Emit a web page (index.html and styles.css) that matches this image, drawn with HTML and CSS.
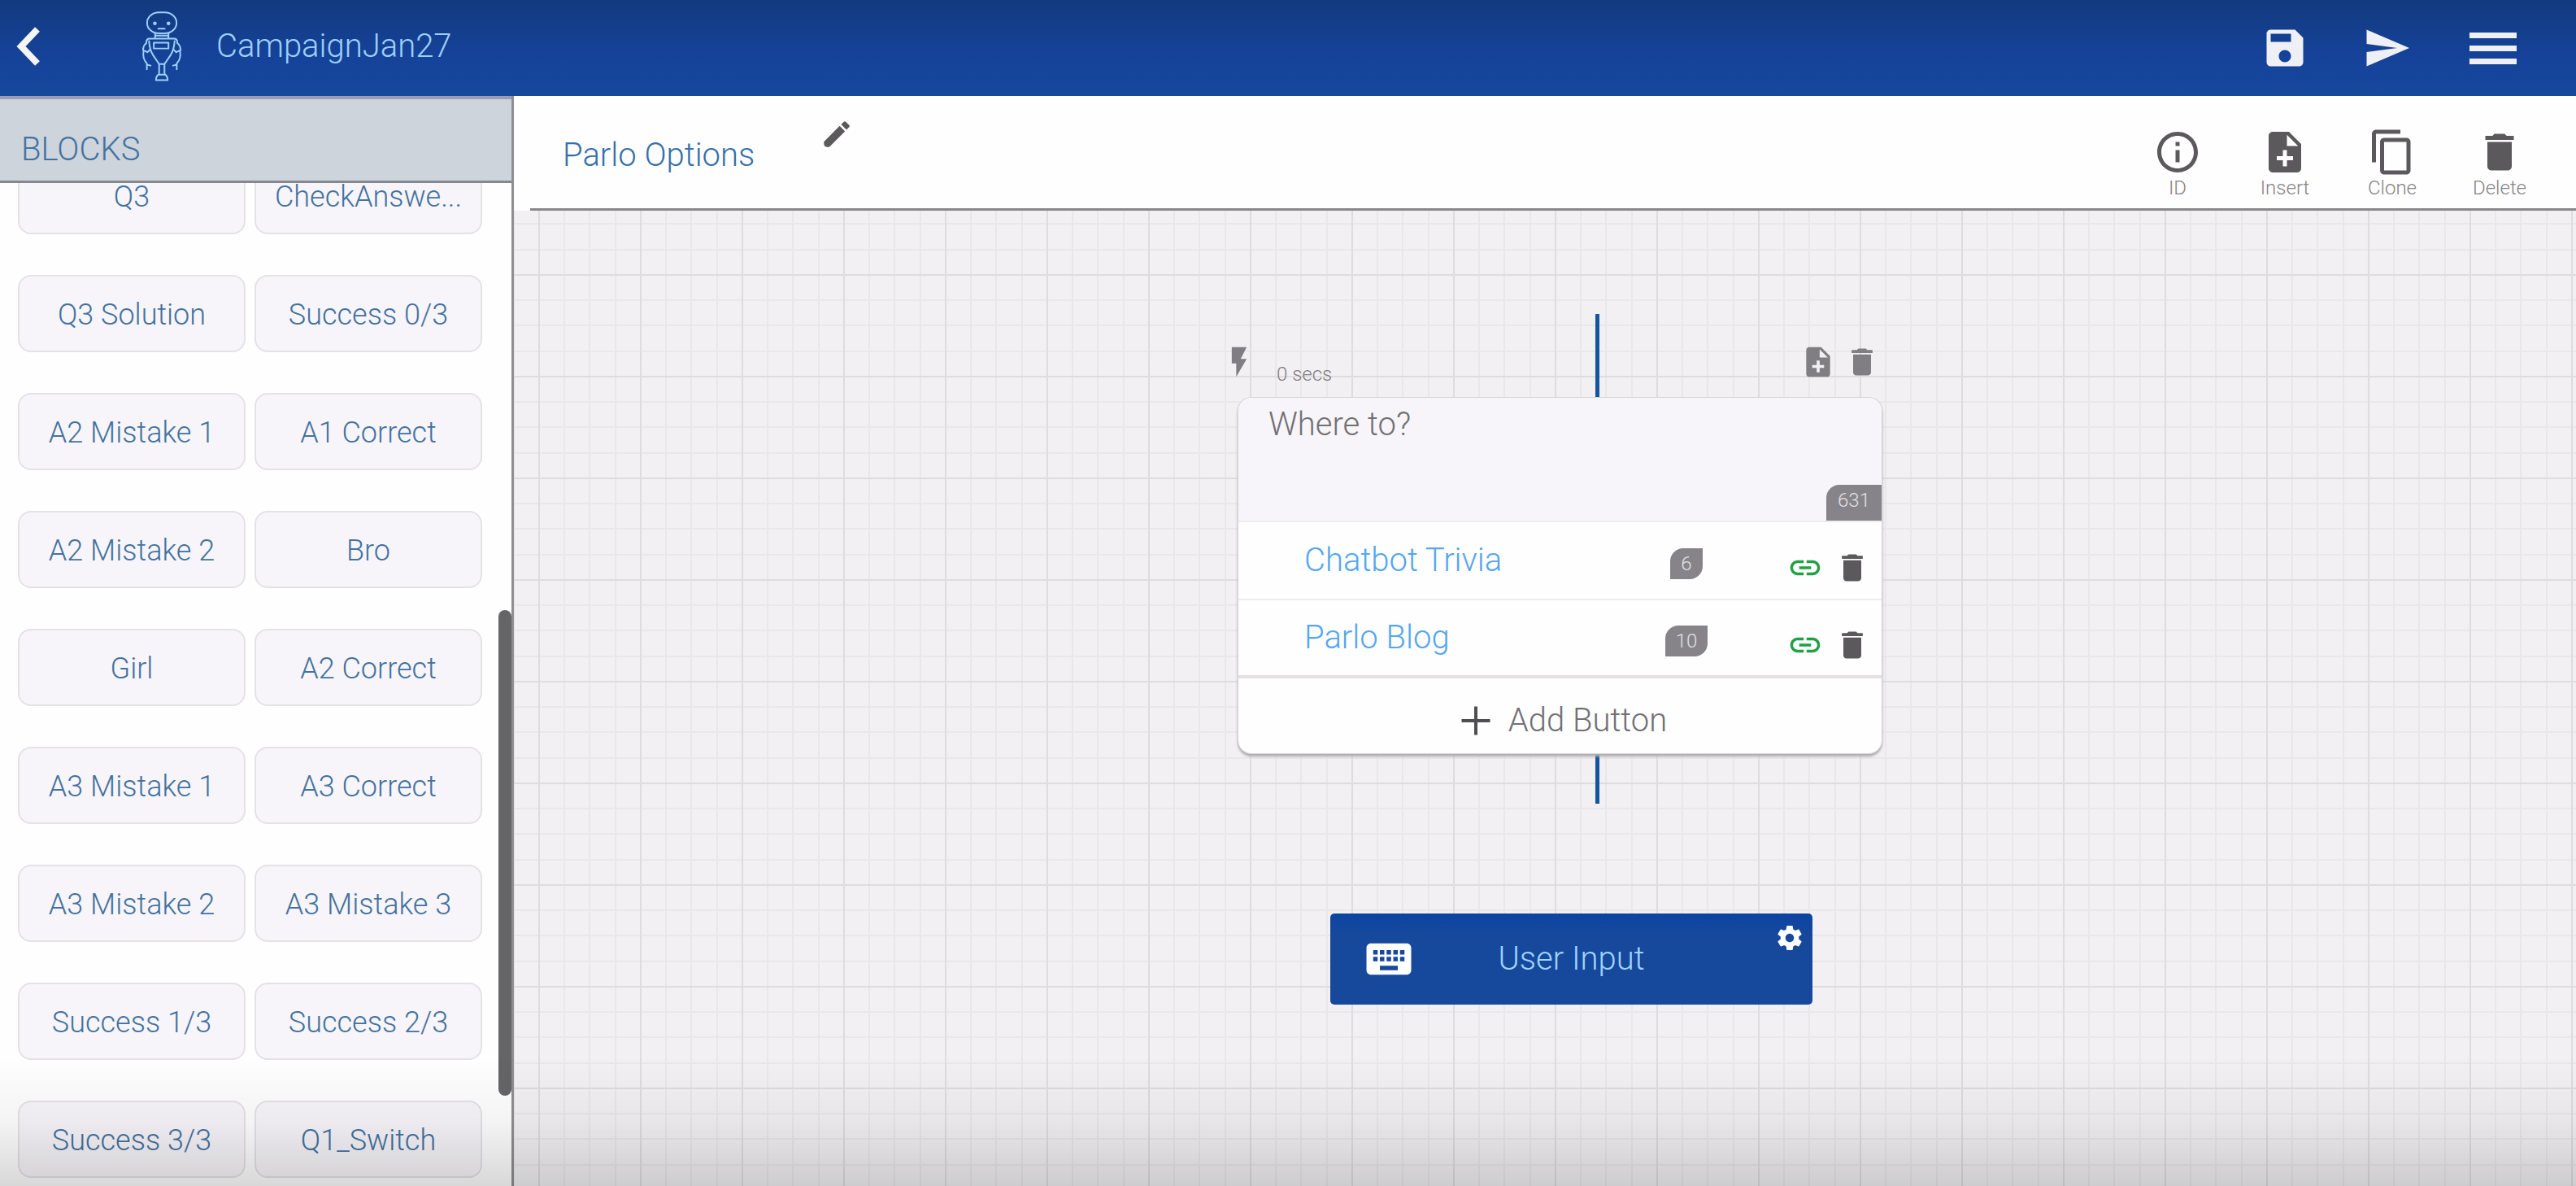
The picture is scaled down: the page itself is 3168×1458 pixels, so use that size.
FILE: index.html
```html
<!DOCTYPE html>
<html lang="en">
<head>
<meta charset="utf-8">
<title>CampaignJan27</title>
<link rel="stylesheet" href="styles.css">
</head>
<body>
<svg class="sprite" aria-hidden="true">
  <symbol id="i-trash" viewBox="0 0 24 24"><path d="M6 19c0 1.1.9 2 2 2h8c1.100 0 2-.9 2-2V7H6v12zM19 4h-3.500l-1-1h-5l-1 1H5v2h14V4z"/></symbol>
  <symbol id="i-note" viewBox="0 0 24 24"><path d="M14 2H6c-1.100 0-2 .9-2 2v16c0 1.100.9 2 2 2h12c1.100 0 2-.9 2-2V8l-6-6zm2 14h-3v3h-2v-3H8v-2h3v-3h2v3h3v2zm-3-7V3.500L18.500 9H13z"/></symbol>
  <symbol id="i-link" viewBox="0 0 24 24"><path d="M3.900 12c0-1.710 1.390-3.100 3.100-3.100h4V7H7c-2.760 0-5 2.240-5 5s2.240 5 5 5h4v-1.900H7c-1.710 0-3.100-1.390-3.100-3.100zM8 13h8v-2H8v2zm9-6h-4v1.900h4c1.710 0 3.100 1.390 3.100 3.100s-1.390 3.100-3.100 3.100h-4V17h4c2.760 0 5-2.240 5-5s-2.240-5-5-5z"/></symbol>
</svg>

<header class="topbar">
  <div class="topbar-left">
    <button class="icon-btn back" aria-label="Back"><svg viewBox="0 0 30 48"><path d="M26 3 6 24l20 21" fill="none" stroke="currentColor" stroke-width="8"/></svg></button>
    <svg class="robot" viewBox="100 30 160 280" stroke="currentColor" stroke-width="6" stroke-linejoin="round" stroke-linecap="round" aria-hidden="true">
      <rect x="125" y="43" width="110" height="78" rx="44" ry="38"/>
      <path d="M167 104h24M155 122v17M205 122v17M157 130h46"/>
      <circle cx="154" cy="84" r="4" fill="currentColor"/><circle cx="205" cy="84" r="4" fill="currentColor"/>
      <path d="M122 156c0-10 4-15 12-15h92c8 0 12 5 12 15"/>
      <rect x="150" y="156" width="55" height="22"/>
      <path d="M132 150c2 30 8 42 16 54l22 32h20l22-32c8-12 14-24 16-54"/>
      <path d="M122 158c-8 6-12 16-12 26l16 8 10-10M238 158c8 6 12 16 12 26l-16 8-10-10"/>
      <path d="M112 186c-4 22 0 36 12 48v22M124 238l14 4M248 186c4 22 0 36-12 48v22M236 238l-14 4"/>
      <path d="M170 238v36M190 238v36M166 276h28M158 296c0-12 6-20 12-20h20c6 0 12 8 12 20z"/>
    </svg>
    <h1 class="text-lg">CampaignJan27</h1>
  </div>
  <nav class="topbar-actions" aria-label="Campaign">
    <button class="icon-btn" aria-label="Save"><svg class="icon-lg" viewBox="0 0 24 24"><path d="M17 3H5c-1.110 0-2 .9-2 2v14c0 1.100.89 2 2 2h14c1.100 0 2-.9 2-2V7l-4-4zm-5 16c-1.660 0-3-1.340-3-3s1.340-3 3-3 3 1.340 3 3-1.340 3-3 3zm3-10H5V5h10v4z"/></svg></button>
    <button class="icon-btn" aria-label="Send"><svg class="icon-lg" viewBox="0 0 24 24"><path d="M1 21 22 12 1 3v7l15 2-15 2z"/></svg></button>
    <button class="icon-btn" aria-label="Menu"><svg class="icon-lg" viewBox="0 0 60 60"><path d="M1 11h58v7H1zM1 27h58v7H1zM1 43h58v7H1z"/></svg></button>
  </nav>
</header>

<div class="workspace">
  <aside class="sidebar">
    <h2 class="sidebar-title text-lg">BLOCKS</h2>
    <div class="block-list">
      <button class="block">Q3</button><button class="block">CheckAnswe...</button>
      <button class="block">Q3 Solution</button><button class="block">Success 0/3</button>
      <button class="block">A2 Mistake 1</button><button class="block">A1 Correct</button>
      <button class="block">A2 Mistake 2</button><button class="block">Bro</button>
      <button class="block">Girl</button><button class="block">A2 Correct</button>
      <button class="block">A3 Mistake 1</button><button class="block">A3 Correct</button>
      <button class="block">A3 Mistake 2</button><button class="block">A3 Mistake 3</button>
      <button class="block">Success 1/3</button><button class="block">Success 2/3</button>
      <button class="block">Success 3/3</button><button class="block">Q1_Switch</button>
    </div>
    <div class="scroll-thumb"></div>
  </aside>

  <main class="main">
    <div class="block-bar">
      <h2 class="block-name text-lg">Parlo Options</h2>
      <button class="icon-btn edit" aria-label="Rename block"><svg viewBox="0 0 24 24"><path d="M3 18.500c0 1.500 1 2.500 2.500 2.500h1.250L17.810 9.940l-3.750-3.750L3 17.250v1.250zM20.710 7.040c.39-.39.39-1.020 0-1.410l-2.340-2.340c-.39-.39-1.020-.39-1.410 0l-1.830 1.830 3.750 3.750 1.830-1.830z"/></svg></button>
      <div class="tools">
        <button class="tool"><svg class="icon-lg" viewBox="0 0 24 24"><path d="M11 7h2v2h-2zm0 4h2v6h-2zm1-9C6.480 2 2 6.480 2 12s4.480 10 10 10 10-4.480 10-10S17.520 2 12 2zm0 18c-4.410 0-8-3.590-8-8s3.590-8 8-8 8 3.590 8 8-3.590 8-8 8z"/></svg>ID</button>
        <button class="tool"><svg class="icon-lg"><use href="#i-note"/></svg>Insert</button>
        <button class="tool"><svg class="icon-lg" viewBox="0 0 24 24"><path d="M16 1H4c-1.100 0-2 .9-2 2v14h2V3h12V1zm3 4H8c-1.100 0-2 .9-2 2v14c0 1.100.9 2 2 2h11c1.100 0 2-.9 2-2V7c0-1.100-.9-2-2-2zm0 16H8V7h11v14z"/></svg>Clone</button>
        <button class="tool"><svg class="icon-lg"><use href="#i-trash"/></svg>Delete</button>
      </div>
    </div>

    <div class="canvas">
      <div class="connector connector-in"></div>
      <div class="connector connector-out"></div>

      <section class="message">
        <div class="message-meta">
          <svg class="icon-sm" viewBox="0 0 24 24" aria-hidden="true"><path d="M7 2v11h3v9l7-12h-4l4-8z"/></svg>
          <span class="delay">0 secs</span>
          <button class="icon-btn" aria-label="Insert message"><svg class="icon-sm"><use href="#i-note"/></svg></button>
          <button class="icon-btn" aria-label="Delete message"><svg class="icon-sm"><use href="#i-trash"/></svg></button>
        </div>
        <div class="card">
          <div class="prompt">
            <textarea class="prompt-text text-lg" aria-label="Message text">Where to?</textarea>
            <span class="chars-left">631</span>
          </div>
          <div class="choice">
            <button class="choice-label text-lg">Chatbot Trivia</button>
            <span class="count-slot"><span class="count">6</span></span>
            <button class="icon-btn link" aria-label="Link Chatbot Trivia"><svg class="icon-sm"><use href="#i-link"/></svg></button>
            <button class="icon-btn" aria-label="Delete Chatbot Trivia"><svg class="icon-sm"><use href="#i-trash"/></svg></button>
          </div>
          <div class="choice">
            <button class="choice-label text-lg">Parlo Blog</button>
            <span class="count-slot"><span class="count">10</span></span>
            <button class="icon-btn link" aria-label="Link Parlo Blog"><svg class="icon-sm"><use href="#i-link"/></svg></button>
            <button class="icon-btn" aria-label="Delete Parlo Blog"><svg class="icon-sm"><use href="#i-trash"/></svg></button>
          </div>
          <button class="add-button text-lg"><svg class="icon-lg" viewBox="0 0 24 24" aria-hidden="true"><path d="M19 12.800h-6.200V19h-1.600v-6.200H5v-1.600h6.200V5h1.600v6.200H19z"/></svg>Add Button</button>
        </div>
      </section>

      <section class="user-input">
        <svg class="keyboard" viewBox="0 0 24 24" aria-hidden="true"><path d="M20 5H4c-1.100 0-1.990.9-1.990 2L2 17c0 1.100.9 2 2 2h16c1.100 0 2-.9 2-2V7c0-1.100-.9-2-2-2zm-9 3h2v2h-2V8zm0 3h2v2h-2v-2zM8 8h2v2H8V8zm0 3h2v2H8v-2zm-1 2H5v-2h2v2zm0-3H5V8h2v2zm9 7H8v-2h8v2zm0-4h-2v-2h2v2zm0-3h-2V8h2v2zm3 3h-2v-2h2v2zm0-3h-2V8h2v2z"/></svg>
        <span class="text-lg">User Input</span>
        <button class="icon-btn gear" aria-label="User input settings"><svg viewBox="0 0 24 24"><path d="M19.430 12.980c.04-.32.07-.64.07-.98s-.03-.66-.07-.98l2.110-1.650c.19-.15.24-.42.12-.64l-2-3.460c-.12-.22-.39-.3-.61-.22l-2.490 1c-.52-.4-1.080-.73-1.690-.98l-.38-2.650C14.460 2.180 14.250 2 14 2h-4c-.25 0-.46.18-.49.42l-.38 2.650c-.61.25-1.170.59-1.690.98l-2.490-1c-.23-.09-.49 0-.61.22l-2 3.460c-.13.22-.07.49.12.64l2.110 1.650c-.04.32-.07.65-.07.98s.03.66.07.98l-2.110 1.650c-.19.15-.24.42-.12.64l2 3.460c.12.22.39.3.61.22l2.490-1c.52.4 1.080.73 1.690.98l.38 2.650c.03.24.24.42.49.42h4c.25 0 .46-.18.49-.42l.38-2.650c.61-.25 1.170-.59 1.690-.98l2.490 1c.23.09.49 0 .61-.22l2-3.460c.12-.22.07-.49-.12-.64l-2.110-1.650zM12 15.500c-1.930 0-3.500-1.570-3.500-3.500s1.570-3.500 3.500-3.500 3.500 1.570 3.500 3.500-1.570 3.500-3.500 3.500z"/></svg></button>
      </section>
    </div>
  </main>
</div>
</body>
</html>
```

FILE: styles.css
```css
* {
  box-sizing: border-box;
}

body {
  margin: 0;
  height: 100vh;
  display: flex;
  flex-direction: column;
  overflow: hidden;
  background: #fefefe;
  font-family: Roboto, "Liberation Sans", sans-serif;
  font-weight: 300;
}

/* shade along the lower edge of the window */
body::after {
  content: "";
  position: fixed;
  inset: auto 0 0;
  height: 160px;
  background: linear-gradient(transparent, rgba(0, 0, 0, .04) 50%, rgba(0, 0, 0, .15));
  pointer-events: none;
}

h1, h2 {
  margin: 0;
}

button, textarea {
  margin: 0;
  padding: 0;
  border: 0;
  background: none;
  color: inherit;
  font: inherit;
}

button {
  cursor: pointer;
}

svg {
  display: block;
  flex: none;
  fill: currentColor;
}

.sprite {
  position: absolute;
  width: 0;
  height: 0;
}

.text-lg {
  font-size: 40px;
  line-height: 48px;
  font-weight: 300;
}

.icon-lg {
  width: 60px;
  height: 60px;
}

.icon-sm {
  width: 44px;
  height: 44px;
}

.icon-btn {
  display: flex;
  align-items: center;
  justify-content: center;
}

/* top bar */
.topbar {
  flex: none;
  display: flex;
  justify-content: space-between;
  height: 118px;
  padding: 0 38px 0 20px;
  background: linear-gradient(#133a7f, #15439a 60%, #16489c);
  color: #eef0f6;
}

.topbar-left {
  display: flex;
  align-items: center;
  padding-bottom: 4px;
  color: #9fd0fb;
}

.back {
  color: #f4f4f0;
}

.back svg {
  width: 30px;
  height: 48px;
}

.robot {
  width: 54px;
  height: 92px;
  margin: 0 40px 0 122px;
  fill: none;
}

.topbar-actions {
  display: flex;
}

.topbar-actions .icon-btn {
  width: 128px;
}

/* sidebar */
.workspace {
  flex: 1;
  display: flex;
  min-height: 0;
}

.sidebar {
  position: relative;
  flex: none;
  display: flex;
  flex-direction: column;
  width: 632px;
  border-right: 3px solid #8f8f93;
}

.sidebar-title {
  flex: none;
  height: 107px;
  padding: 38px 26px 0;
  border-top: 4px solid #9c9db4;
  border-bottom: 3px solid #85898f;
  background: #cdd4dc;
  color: #44729f;
}

.block-list {
  flex: 1;
  min-height: 0;
  display: grid;
  grid-template-columns: 1fr 1fr;
  grid-auto-rows: 95px;
  align-content: end;
  gap: 50px 11px;
  padding: 0 36px 10px 22px;
  overflow: hidden;
}

.block {
  padding-top: 2px;
  border: 2px solid #e5e2e7;
  border-radius: 16px;
  background: #f7f5f9;
  color: #44729f;
  font-size: 36px;
  line-height: 44px;
}

.scroll-thumb {
  position: absolute;
  top: 632px;
  right: 0;
  width: 16px;
  height: 597px;
  border-radius: 8px;
  background: #656466;
}

/* block bar */
.main {
  flex: 1;
  display: flex;
  flex-direction: column;
  min-width: 0;
}

.block-bar {
  flex: none;
  display: flex;
  height: 141px;
  margin-left: 20px;
  padding: 0 28px 0 38px;
  border-bottom: 3px solid #88878a;
  color: #5b595c;
}

.block-name {
  align-self: center;
  padding: 8px 0 0 2px;
  color: #3670ab;
}

.edit {
  align-self: flex-start;
  margin: 26px 0 0 80px;
}

.edit svg {
  width: 42px;
  height: 42px;
}

.tools {
  display: flex;
  align-items: flex-start;
  margin-left: auto;
  padding-top: 39px;
}

.tool {
  display: flex;
  flex-direction: column;
  align-items: center;
  width: 132px;
  font-size: 24px;
  line-height: 28px;
  color: #858388;
}

.tool svg {
  color: #5b595c;
}

/* canvas */
.canvas {
  position: relative;
  flex: 1;
  min-height: 0;
  background-color: #f2f0f3;
  background-image:
    linear-gradient(90deg, #dedce0 2px, transparent 2px),
    linear-gradient(#dedce0 2px, transparent 2px),
    linear-gradient(90deg, transparent 31px, #e9e7ea 31px 33px, transparent 33px 62px, #e9e7ea 62px 64px, transparent 64px 94px, #e9e7ea 94px 96px, transparent 96px),
    linear-gradient(transparent 31px, #e9e7ea 31px 33px, transparent 33px 62px, #e9e7ea 62px 64px, transparent 64px 94px, #e9e7ea 94px 96px, transparent 96px);
  background-size: 125px 125px;
  background-position: 30px 78px;
}

.connector {
  position: absolute;
  left: calc(50% + 62px);
  width: 5px;
  background: #1455a0;
}

.connector-in {
  top: 127px;
  height: 110px;
}

.connector-out {
  top: 660px;
  height: 69px;
}

.message {
  position: absolute;
  top: 164px;
  left: calc(50% - 398px);
  width: 812px;
}

.message-meta {
  display: flex;
  height: 66px;
  align-items: flex-start;
  gap: 10px;
  padding-right: 2px;
  color: #807e82;
}

.delay {
  flex: 1;
  padding: 23px 0 0 14px;
  font-size: 24px;
  line-height: 28px;
}

.card {
  margin: 0 0 0 21px;
  border-radius: 16px;
  overflow: hidden;
  background: #fefefe;
  box-shadow: 0 0 0 1px #d6d4d8, 0 3px 3px 1px #b0aeb2;
}

.prompt {
  position: relative;
  height: 153px;
  border-bottom: 2px solid #efedf0;
  background: #f7f5f9;
}

.prompt-text {
  display: block;
  width: 100%;
  height: 100%;
  padding: 9px 37px;
  resize: none;
  outline: 0;
  color: #727075;
}

.chars-left {
  position: absolute;
  right: 0;
  bottom: 0;
  width: 68px;
  padding: 5px 0 11px;
  border-top-left-radius: 16px;
  background: #868488;
  color: #e2e0e4;
  font-size: 24px;
  line-height: 28px;
  text-align: center;
}

.choice {
  display: flex;
  align-items: center;
  height: 94px;
  padding: 0 14px 0 81px;
  color: #5b595c;
}

.choice + .choice {
  border-top: 2px solid #efedf0;
}

.choice-label {
  margin-right: auto;
  color: #55a6ee;
}

.count-slot {
  display: flex;
  justify-content: center;
  width: 90px;
  padding-top: 8px;
  margin-right: 79px;
}

.count {
  padding: 5px 13px;
  border-radius: 16px 0;
  background: #868488;
  color: #e2e0e4;
  font-size: 24px;
  line-height: 28px;
}

.choice .icon-btn {
  padding-top: 18px;
  margin-left: 14px;
}

.choice .link {
  margin-left: 0;
  color: #22a045;
}

.add-button {
  display: flex;
  align-items: center;
  justify-content: center;
  gap: 10px;
  width: 100%;
  height: 96px;
  padding: 12px 2px 0 0;
  border-top: 4px solid #e3e1e5;
  color: #727075;
}

.add-button svg {
  color: #4f4d51;
}

.user-input {
  position: absolute;
  top: 864px;
  left: calc(50% - 264px);
  width: 593px;
  height: 112px;
  display: flex;
  align-items: center;
  justify-content: center;
  border-radius: 5px;
  background: linear-gradient(#0d44a2, #16489c 25%);
  color: #9fd4ff;
}

.keyboard {
  position: absolute;
  left: 39px;
  width: 66px;
  height: 66px;
  color: #fff;
}

.gear {
  position: absolute;
  top: 12px;
  right: 10px;
  color: #fff;
}

.gear svg {
  width: 36px;
  height: 36px;
}
```
